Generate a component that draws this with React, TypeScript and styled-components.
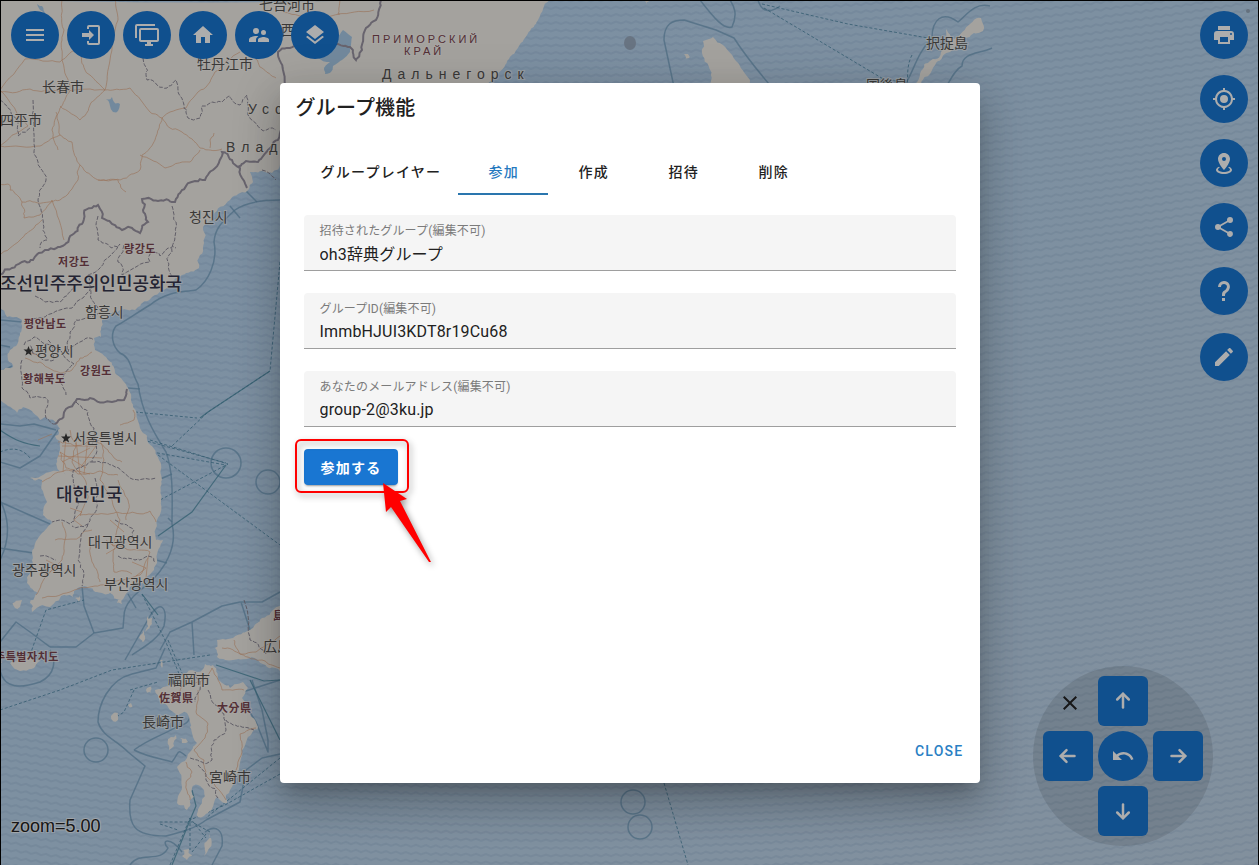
import React from "react";
import styled, { createGlobalStyle, css } from "styled-components";

const GlobalStyle = createGlobalStyle`
  *, *::before, *::after { box-sizing: border-box; }
  body {
    margin: 0;
    color: #212121;
    font-family: Roboto, "Noto Sans CJK JP", sans-serif;
    font-size: 16px;
    line-height: 24px;
  }
  button, input { font: inherit; }
`;

/* ---------- icons ---------- */

const icons = {
  menu: "M3,6H21V8H3V6M3,11H21V13H3V11M3,16H21V18H3V16Z",
  login:
    "M10,17V14H3V10H10V7L15,12L10,17M10,2H19A2,2 0 0,1 21,4V20A2,2 0 0,1 19,22H10A2,2 0 0,1 8,20V18H10V20H19V4H10V6H8V4A2,2 0 0,1 10,2Z",
  monitors:
    "M22,17V7H6V17H22M22,5A2,2 0 0,1 24,7V17C24,18.11 23.1,19 22,19H16V21H18V23H10V21H12V19H6C4.89,19 4,18.11 4,17V7A2,2 0 0,1 6,5H22M2,3V15H0V3A2,2 0 0,1 2,1H20V3H2Z",
  home: "M10,20V14H14V20H19V12H22L12,3L2,12H5V20H10Z",
  people:
    "M16.5,12A2.5,2.5 0 0,0 19,9.5A2.5,2.5 0 0,0 16.5,7A2.5,2.5 0 0,0 14,9.5A2.5,2.5 0 0,0 16.5,12M9,11A3,3 0 0,0 12,8A3,3 0 0,0 9,5A3,3 0 0,0 6,8A3,3 0 0,0 9,11M16.5,14C14.67,14 11,14.92 11,16.75V19H22V16.75C22,14.92 18.33,14 16.5,14M9,13C6.67,13 2,14.17 2,16.5V19H9V16.75C9,15.9 9.33,14.41 11.37,13.28C10.5,13.1 9.66,13 9,13Z",
  layers:
    "M12,16L19.36,10.27L21,9L12,2L3,9L4.63,10.27M12,18.54L4.62,12.81L3,14.07L12,21.07L21,14.07L19.37,12.8L12,18.54Z",
  printer:
    "M18,3H6V7H18M19,12A1,1 0 0,1 18,11A1,1 0 0,1 19,10A1,1 0 0,1 20,11A1,1 0 0,1 19,12M16,19H8V14H16M19,8H5A3,3 0 0,0 2,11V17H6V21H18V17H22V11A3,3 0 0,0 19,8Z",
  gps: "M12,8A4,4 0 0,1 16,12A4,4 0 0,1 12,16A4,4 0 0,1 8,12A4,4 0 0,1 12,8M3.05,13H1V11H3.05C3.5,6.83 6.83,3.5 11,3.05V1H13V3.05C17.17,3.5 20.5,6.83 20.95,11H23V13H20.95C20.5,17.17 17.17,20.5 13,20.95V23H11V20.95C6.83,20.5 3.5,17.17 3.05,13M12,5A7,7 0 0,0 5,12A7,7 0 0,0 12,19A7,7 0 0,0 19,12A7,7 0 0,0 12,5Z",
  marker:
    "M12,2C15.31,2 18,4.66 18,7.95C18,12.41 12,19 12,19C12,19 6,12.41 6,7.95C6,4.66 8.69,2 12,2M12,6A2,2 0 0,0 10,8A2,2 0 0,0 12,10A2,2 0 0,0 14,8A2,2 0 0,0 12,6M20,19C20,21.21 16.42,23 12,23C7.58,23 4,21.21 4,19C4,17.71 5.22,16.56 7.11,15.83L7.75,16.74C6.67,17.19 6,17.81 6,18.5C6,19.88 8.69,21 12,21C15.31,21 18,19.88 18,18.5C18,17.81 17.33,17.19 16.25,16.74L16.89,15.83C18.78,16.56 20,17.71 20,19Z",
  share:
    "M18,16.08C17.24,16.08 16.56,16.38 16.04,16.85L8.91,12.7C8.96,12.47 9,12.24 9,12C9,11.76 8.96,11.53 8.91,11.3L15.96,7.19C16.5,7.69 17.21,8 18,8A3,3 0 0,0 21,5A3,3 0 0,0 18,2A3,3 0 0,0 15,5C15,5.24 15.04,5.47 15.09,5.7L8.04,9.81C7.5,9.31 6.79,9 6,9A3,3 0 0,0 3,12A3,3 0 0,0 6,15C6.79,15 7.5,14.69 8.04,14.19L15.16,18.34C15.11,18.55 15.08,18.77 15.08,19C15.08,20.61 16.39,21.91 18,21.91C19.61,21.91 20.92,20.61 20.92,19A2.92,2.92 0 0,0 18,16.08Z",
  help: "M10,19H13V22H10V19M12,2C17.35,2.22 19.68,7.62 16.5,11.67C15.67,12.67 14.33,13.33 13.67,14.17C13,15 13,16 13,17H10C10,15.33 10,13.92 10.67,12.92C11.33,11.92 12.67,11.33 13.5,10.67C15.92,8.43 15.32,5.26 12,5A3,3 0 0,0 9,8H6A6,6 0 0,1 12,2Z",
  pencil:
    "M20.71,7.04C21.1,6.65 21.1,6 20.71,5.63L18.37,3.29C18,2.9 17.35,2.9 16.96,3.29L15.12,5.12L18.87,8.87M3,17.25V21H6.75L17.81,9.93L14.06,6.18L3,17.25Z",
  undo: "M12.5,8C9.85,8 7.45,9 5.6,10.6L2,7V16H11L7.38,12.38C8.77,11.22 10.54,10.5 12.5,10.5C16.04,10.5 19.05,12.81 20.1,16L22.47,15.22C21.08,11.03 17.15,8 12.5,8Z",
  close:
    "M19,6.41L17.59,5L12,10.59L6.41,5L5,6.41L10.59,12L5,17.59L6.41,19L12,13.41L17.59,19L19,17.59L13.41,12L19,6.41Z",
};

type IconName = keyof typeof icons;

const IconSvg = styled.svg`
  display: block;
  width: 24px;
  height: 24px;
  fill: currentColor;
`;

const Icon = ({ name }: { name: IconName }) => (
  <IconSvg viewBox="0 0 24 24" aria-hidden="true">
    <path d={icons[name]} />
  </IconSvg>
);

const Arrow = ({ angle }: { angle: number }) => (
  <IconSvg viewBox="0 0 24 24" aria-hidden="true">
    <g
      transform={`rotate(${angle} 12 12)`}
      fill="none"
      stroke="currentColor"
      strokeWidth="2.5"
      strokeLinecap="round"
    >
      <path d="M12 18.5V5" />
      <path d="M6.2 10.500L12 4.700L17.800 10.500" />
    </g>
  </IconSvg>
);

/* ---------- map geometry ---------- */

type Pt = [number, number];

let seed = 7;
const rand = () => {
  seed = (seed * 16807) % 2147483647;
  return seed / 2147483647 - 0.5;
};

/* Midpoint displacement: turns a coarse outline into a ragged coast or border. */
const rough = (src: string, amp: number, closed = false): string => {
  let pts: Pt[] = src.trim().split(/\s+/).map((p) => p.split(",").map(Number) as Pt);
  if (closed) pts = [...pts, pts[0]];
  for (let pass = 0; pass < 3; pass++) {
    const out: Pt[] = [];
    for (let i = 0; i < pts.length - 1; i++) {
      const [ax, ay] = pts[i];
      const [bx, by] = pts[i + 1];
      out.push(pts[i]);
      if (Math.hypot(bx - ax, by - ay) > 4) {
        const k = amp / (pass + 1);
        out.push([(ax + bx) / 2 + rand() * k, (ay + by) / 2 + rand() * k]);
      }
    }
    out.push(pts[pts.length - 1]);
    pts = out;
  }
  return "M" + pts.map(([x, y]) => `${x.toFixed(1)} ${y.toFixed(1)}`).join("L") + (closed ? "Z" : "");
};

const coasts = [
  "0,0 550,0 540,16 530,31 519,46 507,61 496,76 483,88 400,130 340,150 280,163 272,173 262,171 250,172 253,182 240,193 230,200 217,211 213,220 203,227 204,243 200,255 199,268 182,275 167,288 152,297 138,307 120,310 102,320 101,337 94,338 95,350 108,360 115,373 128,388 133,407 143,433 147,440 159,460 162,480 161,502 157,520 156,540 163,540 157,563 143,583 130,587 122,600 110,593 97,592 90,588 80,587 73,597 60,598 50,607 40,606 32,612 30,603 38,593 27,583 32,568 32,553 42,533 52,522 43,515 47,502 42,480 30,478 50,472 67,475 57,467 60,450 55,436 58,430 57,423 45,417 40,420 23,407 17,413 0,400 0,370 13,367 8,360 10,350 20,333 22,320 7,317 0,308",
  "197,672 205,664 213,665 218,680 230,688 243,682 248,688 242,698 248,712 258,727 248,737 240,763 230,790 227,803 217,797 208,813 198,817 202,803 204,790 198,785 192,788 194,797 190,803 187,810 177,803 182,787 177,767 187,758 197,743 190,727 187,713 178,715 168,707 160,703 155,690 163,687 177,683 187,673",
  "215,648 217,640 233,638 250,630 262,618 273,610 282,605 300,640 290,674 282,672 267,667 258,660 250,658 233,660 217,657",
  "10,663 18,658 30,657 40,661 34,668 20,671",
  "713,37 703,41 702,53 709,67 710,85 711,101 762,101 750,80 736,61 723,45",
  "981,18 983,31 974,33 962,41 950,52 938,61 930,74 921,84 913,98 911,92 921,71 930,61 941,52 950,43 946,29 954,39 970,24",
  "148,616 152,618 150,626 145,632",
  "143,630 145,636 142,642 139,638",
  "209,834 211,838 208,850 204,856 206,842",
  "183,850 189,849 192,856 187,860 182,856",
  "170,738 176,735 174,746 169,750",
  "180,738 186,736 188,742 182,743",
  "111,716 118,713 118,720 113,721",
  "128,705 131,703 132,707",
  "147,688 151,686 151,693",
  "160,660 163,660 162,668",
  "684,54 688,54 689,58 685,59",
  "15,602 22,600 20,607 15,608",
  "118,600 123,597 122,604 117,603",
  "75,598 81,594 79,602",
  "643,0 650,0 646,4",
];

const lakes = [
  "106,99 112,97 114,102 120,104 118,111 113,112 110,106",
  "343,30 352,37 350,52 342,60 333,66 331,72 325,74 324,68 330,62 318,58 326,44",
  "37,4 42,6 46,14 40,10",
];

const nationalBorders = [
  "0,275 12,268 22,262 33,260 45,250 60,247 72,235 82,224 84,213 92,208 98,205 102,218 112,224 122,230 132,228 140,233 148,222 143,210 142,199 158,201 175,202 182,190 195,181 205,180 213,170 222,152 232,160 240,168 242,178 247,188",
  "238,167 246,161 258,162 268,150 278,140 284,120 283,70 278,52 290,48 318,40 335,43 350,47 356,60 362,50 366,28 376,20 381,0",
  "55,424 66,409 77,399 90,398 112,402 124,400 127,389",
];

const provinceBorders = [
  "143,58 147,80 158,86 167,88 176,80 184,105 188,118 200,118 202,106 212,102 222,102 230,96 240,105 247,95 248,115 262,130 276,130",
  "33,100 34,140 38,165 46,180 38,200 43,220 47,240 40,248",
  "0,100 8,108 18,120 18,136 30,128",
  "98,216 98,240 112,248 120,244 100,268 88,275 90,290 72,308 50,314 24,322",
  "124,245 118,262 122,275 150,262 150,250 160,256 168,248 176,248",
  "172,206 176,222 172,252 168,262 172,276",
  "90,285 92,300 102,312 76,320 70,332 68,352 84,340 94,340",
  "35,296 45,302 60,302 80,282",
  "24,345 34,337 50,345 62,352 74,364 60,380 66,395",
  "22,360 22,388 30,398 48,400 46,418 56,424",
  "48,340 54,360 38,356 30,345",
  "76,402 88,412 94,428 92,444",
  "98,440 92,462 78,468 72,476 78,500 75,516 70,524 60,520 52,522",
  "92,462 112,465 130,478 156,478",
  "95,478 96,500 94,514 88,524 72,526",
  "88,524 80,545 78,560 84,574 82,586",
  "115,520 124,524 134,530 128,540",
  "118,556 135,560 148,556 156,562",
  "40,556 56,560",
  "208,690 214,704 224,716 226,730 214,740 212,760 202,762 190,758",
  "195,672 200,690 195,702",
  "226,720 240,726 254,730",
  "198,765 206,780 216,790 218,798",
  "244,600 250,640 266,654",
  "262,170 276,180",
];

const roads = [
  "0,92 30,89 60,92 105,90 130,88 150,112 162,118 170,128 182,132 200,148 222,149",
  "25,59 0,90 28,126 0,146",
  "25,59 60,62 80,48 100,42",
  "62,0 64,30 62,60 70,90 60,108 52,130 58,150",
  "105,90 85,70 80,50",
  "105,90 90,105 80,120 60,106",
  "162,118 155,140 142,155 140,170 120,180 98,180 80,165 72,142 60,135 56,112",
  "0,146 40,146 60,135",
  "162,118 186,108 198,92 210,82 218,70 240,52",
  "140,155 165,168 190,162 200,150",
  "98,180 118,180 126,192",
  "80,165 78,180 60,200 38,203 22,202 10,190 8,184 0,184",
  "22,202 24,218 40,215 52,200 64,240",
  "0,255 20,240 34,228 42,220",
  "210,148 210,140 214,133",
  "250,55 262,68 276,78",
  "115,0 118,20 110,60 105,90",
  "25,358 40,362 58,372 72,370 80,358 92,352",
  "120,425 134,420 133,410",
  "58,442 75,446 92,440 108,450 122,462",
  "60,452 66,468 78,474 100,471 118,475",
  "70,430 76,445 72,462 84,478 88,498 80,516",
  "100,440 104,460 100,480 112,500 120,520 112,545",
  "80,515 105,514 130,513 150,511 156,522",
  "62,522 66,536 62,560 48,575 36,595",
  "112,545 130,550 150,552 140,575 120,580 95,586 70,592 42,598",
  "55,540 78,538 92,530",
  "90,545 92,562 100,582",
  "115,548 114,572 132,574",
  "42,482 66,470 90,474",
  "118,480 128,500 126,520",
  "212,668 200,682 182,686 170,700",
  "212,668 222,690 244,690",
  "198,690 196,712 208,724 205,738 194,750",
  "194,750 204,760 206,776 226,800",
  "232,782 242,752 240,734 256,728",
  "186,762 192,772 186,782 190,800",
  "222,648 240,654 262,660 280,668",
  "234,640 240,654 256,652 280,636",
  "340,0 338,14 374,10",
  "280,10 300,16 340,14",
];

const denseRoads =
  "M62 446l34 0 M58 456l44 2 M66 436l-3 36 M76 440l4 34 M88 438l-4 36 M62 462l28-14 M60 452l26 16 M96 446l-16 22 M70 508l12 4-8 8 8 6 M106 540l10 8-10 6 M132 562l14 6-10 8 M148 558l-2 20 M110 520l14 12 M46 560l12 6-14 10 M38 440l14-6 M28 352l12 4";

const seaBoundaries = [
  "M280 200C262 200 246 202 235 210C222 222 215 228 214 242C218 262 208 282 196 290C186 292 168 290 150 305C138 312 124 322 116 326C110 334 112 346 120 353C132 358 130 370 138 384C142 412 152 430 166 452C174 474 172 500 172 524C178 548 164 570 148 584C138 592 124 602 124 616L123 628L94 633L76 647H50",
  "M245 190l12 12M230 206l10 12M128 388l12 1M158 480l14-6M172 522l-4-4M156 560l11 3M128 594l8 14M82 586l2 20 10 27",
  "M0 320L22 322M0 345L10 347M0 372L12 366M0 424L20 426L34 424L56 430M0 462L20 468L40 456L58 430M0 500C10 520 10 540 0 560M0 502L50 524M0 548L34 553",
  "M0 642L16 622L30 632L50 647M0 670C4 690 22 688 40 682C56 674 56 660 50 650",
  "M125 660L150 616C160 600 168 606 164 626C158 640 142 648 132 655M160 650L170 632L192 622L222 606L240 602L262 602L280 592M192 622L194 655M241 602L250 630",
  "M165 648L156 668L132 674C108 680 98 706 98 722C102 736 116 740 128 752L145 766L130 800C128 826 134 836 166 836C182 832 196 828 206 820M134 750C150 738 166 734 178 726C190 724 194 716 184 706M134 750C150 758 160 758 172 762C180 752 176 748 186 756",
  "M206 820L240 802L246 770L262 758L280 754M242 700L256 722L268 752L268 740L262 710L252 680M218 700L280 680",
  "M130 865C140 850 160 864 168 848C160 840 170 836 182 852M205 832C216 824 224 830 222 846L212 865",
  "M525 0C515 22 500 26 494 44C480 60 472 70 474 86",
  "M677 101L664 40C664 24 672 20 684 20L716 30L734 38C748 60 772 88 790 108",
  "M700 0C714 18 724 30 732 27C738 14 734 6 730 0M758 0C762 14 772 12 780 6",
  "M990 6C974 2 966 16 958 22C942 10 932 20 932 38C916 54 914 72 904 86C892 76 880 78 868 96M992 48C980 54 962 52 962 66C950 72 946 96 932 104M840 104C840 92 852 92 858 100",
];

const ferryRoutes = [
  "M280 262L270 371L208 412L172 446",
  "M135 412L197 418M150 440L228 464L160 500L152 502M152 452L226 465M158 455L280 545M143 440L226 463",
  "M0 710L60 690L112 670L210 655M130 690L158 682M134 690L124 712L118 716M142 594L165 640L190 700M30 655L46 610L84 600",
  "M280 758L206 818M280 774L225 805L190 820M210 832L192 822L158 822M170 865L190 818L206 838M190 818V850M206 834L192 852M168 640L185 680M160 824L178 830",
  "M762 4L848 24L945 41M764 8L885 80L908 90M912 55C904 70 910 90 906 100",
  "M664 783L688 865",
  "M0 452C14 446 24 450 30 458",
];

const shippingLines = [
  "M226 465L192 512L158 536",
  "M142 594L158 615M216 665L264 681L280 680M250 680L280 740",
  "M192 790L196 806L190 820L172 865M0 430C14 440 24 444 40 446",
  "M270 371L208 412L200 418",
];

const rings: [number, number, number][] = [
  [226, 463, 15],
  [268, 482, 12],
  [96, 750, 12],
  [633, 802, 12],
  [640, 827, 12],
];

/* Wave texture lines: their slope follows the curved parallels of the projection. */
const waveLine = (y0: number): string => {
  const pts: string[] = [];
  for (let x = -4, i = 0; x <= 1264; x += 5, i++) {
    const u = (x - 620) / 620;
    const y = y0 - 46 * u * u - 10 * u + (i % 2 ? 1 : -1);
    pts.push(`${x} ${y.toFixed(1)}`);
  }
  return "M" + pts.join("L");
};
const waves = Array.from({ length: 128 }, (_, i) => waveLine(i * 7.5)).join("");

const coastPath = coasts.map((c) => rough(c, 5, true)).join("");
const lakePath = lakes.map((c) => rough(c, 3, true)).join("");
const nationalPath = nationalBorders.map((c) => rough(c, 5)).join("");
const provincePath = provinceBorders.map((c) => rough(c, 5)).join("");
const roadPath = roads.map((c) => rough(c, 4)).join("");

type LabelKind = "city" | "region" | "country" | "wide" | "wideRegion";

const labels: [LabelKind, number, number, string][] = [
  ["city", 259, 10, "七台河市"],
  ["city", 267, 35, "鸡西市"],
  ["city", 197, 69, "牡丹江市"],
  ["city", 42, 92, "长春市"],
  ["city", 0, 125, "四平市"],
  ["wide", 248, 114, "Усс"],
  ["wide", 226, 152, "Влад"],
  ["wideRegion", 372, 43, "ПРИМОРСКИЙ"],
  ["wideRegion", 404, 55, "КРАЙ"],
  ["wide", 382, 79, "Дальнегорск"],
  ["city", 926, 48, "択捉島"],
  ["city", 866, 90, "国後島"],
  ["city", 189, 222, "청진시"],
  ["region", 124, 253, "량강도"],
  ["region", 58, 266, "저강도"],
  ["country", 0, 290, "조선민주주의인민공화국"],
  ["city", 85, 317, "함흥시"],
  ["region", 24, 328, "평안남도"],
  ["city", 35, 356, "평양시"],
  ["region", 80, 375, "강원도"],
  ["region", 23, 383, "황해북도"],
  ["city", 73, 443, "서울특별시"],
  ["country", 56, 501, "대한민국"],
  ["city", 88, 547, "대구광역시"],
  ["city", 12, 575, "광주광역시"],
  ["city", 104, 589, "부산광역시"],
  ["region", -5, 661, "주특별자치도"],
  ["region", 273, 620, "島根県"],
  ["city", 263, 651, "広島市"],
  ["city", 168, 685, "福岡市"],
  ["region", 159, 702, "佐賀県"],
  ["region", 217, 712, "大分県"],
  ["city", 142, 727, "長崎市"],
  ["city", 209, 782, "宮崎市"],
];

const MapSvg = styled.svg`
  position: absolute;
  inset: 0;
  width: 100%;
  height: 100%;
`;

const labelStyles = {
  city: css`
    font-size: 14px;
    fill: #565553;
  `,
  region: css`
    font-size: 11px;
    font-weight: 700;
    letter-spacing: 0.05em;
    fill: #7c4650;
  `,
  country: css`
    font-size: 18px;
    font-weight: 500;
    fill: #36364c;
  `,
  wide: css`
    font-size: 14px;
    letter-spacing: 6px;
    fill: #565553;
  `,
  wideRegion: css`
    font-size: 11px;
    letter-spacing: 3px;
    fill: #7c4650;
  `,
};

const MapLabel = styled.text<{ $kind: LabelKind }>`
  font-family: "Liberation Sans", "Noto Sans CJK KR", "Noto Sans CJK SC", sans-serif;
  paint-order: stroke;
  stroke: rgba(250, 248, 244, 0.6);
  stroke-width: 2px;
  ${(p) => labelStyles[p.$kind]}
`;

const BackgroundMap = () => (
  <MapSvg viewBox="1 1 1257 864" preserveAspectRatio="xMinYMin slice" role="img" aria-label="地図">
    <defs>
      <linearGradient id="sea" x1="0" y1="0" x2="1" y2="1">
        <stop offset="0" stopColor="#b6d4f1" />
        <stop offset="0.5" stopColor="#b9d4ed" />
        <stop offset="1" stopColor="#c0d4e8" />
      </linearGradient>
    </defs>
    <rect width="1260" height="866" fill="url(#sea)" />
    <path d={waves} fill="none" stroke="#88a8c8" strokeOpacity="0.2" strokeWidth="2" />
    <g fill="none" stroke="#6f9cbd" strokeOpacity="0.7" strokeWidth="1.5" strokeLinejoin="round">
      {seaBoundaries.map((d) => (
        <path key={d} d={d} />
      ))}
      {rings.map(([cx, cy, r]) => (
        <circle key={`${cx}-${cy}`} cx={cx} cy={cy} r={r} />
      ))}
    </g>
    <g fill="none" stroke="#4f88a6" strokeOpacity="0.8" strokeWidth="1" strokeDasharray="3 2">
      {ferryRoutes.map((d) => (
        <path key={d} d={d} />
      ))}
    </g>
    <g fill="none" stroke="#4f8fa8" strokeOpacity="0.8" strokeWidth="1.2">
      {shippingLines.map((d) => (
        <path key={d} d={d} />
      ))}
    </g>
    <path d={coastPath} fill="#f2efe9" />
    <path d={lakePath} fill="#a9cbe8" />
    <path d={roadPath} fill="none" stroke="#e0a782" strokeOpacity="0.7" strokeWidth="0.9" />
    <path d={denseRoads} fill="none" stroke="#e8a478" strokeOpacity="0.7" strokeWidth="0.8" />
    <path d={provincePath} fill="none" stroke="#8e8a98" strokeWidth="1" strokeDasharray="4 1.5" />
    <path d={nationalPath} fill="none" stroke="#9a94a2" strokeWidth="2" />
    <ellipse cx="630" cy="43" rx="6" ry="7" fill="#9aabc0" />
    <circle cx="1248" cy="11" r="2" fill="#94a6b8" />
    <g fill="#3a3a3a">
      <path d="M28.500 346l1.300 3.600h3.700l-3 2.300 1.100 3.700-3.100-2.200-3.100 2.200 1.100-3.700-3-2.300h3.700z" />
      <path d="M66 433l1.300 3.600h3.700l-3 2.300 1.100 3.700-3.100-2.200-3.100 2.200 1.100-3.700-3-2.300h3.700z" />
    </g>
    {labels.map(([kind, x, y, text]) => (
      <MapLabel key={text} $kind={kind} x={x} y={y}>
        {text}
      </MapLabel>
    ))}
  </MapSvg>
);

/* ---------- page ---------- */

const Screen = styled.main`
  position: relative;
  display: flex;
  flex-direction: column;
  justify-content: space-between;
  min-height: 100vh;
  overflow: hidden;
  border: 1px solid #000;
  border-bottom: 0;
`;

const ScreenRow = styled.div<{ $align: "start" | "end" }>`
  position: relative;
  display: flex;
  justify-content: space-between;
  align-items: flex-${(p) => p.$align};
  padding: 10px;
`;

const TopTools = styled.nav`
  display: flex;
  gap: 8px;
`;

const SideTools = styled.div`
  display: flex;
  flex-direction: column;
  gap: 18px;
`;

const SideGroup = styled.div`
  display: flex;
  flex-direction: column;
  gap: 16px;
`;

const controlColors = css`
  display: flex;
  align-items: center;
  justify-content: center;
  padding: 0;
  border: 0;
  background: #1976d2;
  color: #fff;
  cursor: pointer;
`;

const RoundButton = styled.button`
  ${controlColors}
  width: 48px;
  height: 48px;
  border-radius: 50%;
`;

const ZoomReadout = styled.output`
  font-family: "Liberation Sans", sans-serif;
  font-size: 18px;
  line-height: 24px;
  padding-bottom: 17px;
  color: #222;
  text-shadow: 1px 1px 0 #fff8, -1px -1px 0 #fff8, 1px -1px 0 #fff8, -1px 1px 0 #fff8;
`;

const MovePad = styled.div`
  display: grid;
  grid-template-columns: repeat(3, 50px);
  grid-template-rows: repeat(3, 50px);
  gap: 5px;
  margin: 0 35px 9px 0;
  padding: 10px;
  border-radius: 50%;
  background: rgba(0, 0, 0, 0.1);
`;

const PadButton = styled.button<{ $col: number; $row: number; $round?: boolean }>`
  ${controlColors}
  grid-column: ${(p) => p.$col};
  grid-row: ${(p) => p.$row};
  border-radius: ${(p) => (p.$round ? "50%" : "6px")};
`;

const PadClose = styled.button`
  display: grid;
  place-content: center;
  grid-column: 1;
  grid-row: 1;
  padding: 4px 0 0 4px;
  border: 0;
  background: none;
  color: #222;
  cursor: pointer;
`;

/* ---------- dialog ---------- */

const Scrim = styled.div`
  position: absolute;
  inset: 0;
  display: flex;
  align-items: center;
  justify-content: center;
  background: rgba(0, 0, 0, 0.32);
`;

const Dialog = styled.section`
  display: flex;
  flex-direction: column;
  width: 700px;
  max-width: calc(100% - 48px);
  min-height: 700px;
  border-radius: 4px;
  background: #fff;
  box-shadow: 0 11px 15px -7px rgba(0, 0, 0, 0.2), 0 24px 38px 3px rgba(0, 0, 0, 0.14),
    0 9px 46px 8px rgba(0, 0, 0, 0.12);
`;

const DialogTitle = styled.h1`
  margin: 0;
  padding: 13px 16px 11px;
  font-size: 20px;
  font-weight: 500;
  line-height: 24px;
  letter-spacing: 0.01em;
`;

const DialogBody = styled.div`
  flex: 1;
  padding: 16px 24px;
`;

const Tabs = styled.div`
  display: flex;
`;

const Tab = styled.button<{ $active: boolean }>`
  min-width: 90px;
  height: 48px;
  padding: 4px 16px 0 17px;
  border: 0;
  border-bottom: 2px solid ${(p) => (p.$active ? "#2a76ae" : "transparent")};
  background: none;
  color: ${(p) => (p.$active ? "#2478be" : "#212121")};
  font-size: 14px;
  font-weight: 500;
  letter-spacing: 0.09em;
  cursor: pointer;

  &:first-child {
    padding-right: 17px;
  }
`;

const JoinForm = styled.form`
  display: flex;
  flex-direction: column;
  align-items: flex-start;
  gap: 22px;
  padding-top: 20px;
`;

const Field = styled.div`
  display: flex;
  flex-direction: column;
  width: 100%;
  height: 56px;
  padding: 7px 16px 0;
  border-bottom: 1px solid #9e9e9e;
  border-radius: 4px 4px 0 0;
  background: #f5f5f5;
  letter-spacing: 0.01em;
`;

const FieldLabel = styled.label`
  color: #7b7b7b;
  font-size: 12px;
  line-height: 18px;
`;

const FieldInput = styled.input`
  width: 100%;
  height: 26px;
  padding: 0;
  border: 0;
  outline: 0;
  background: none;
  color: #212121;
  letter-spacing: inherit;
`;

const JoinAction = styled.div`
  position: relative;
`;

const JoinButton = styled.button`
  height: 36px;
  padding: 1px 16px 0 17px;
  border: 0;
  border-radius: 4px;
  background: #1976d2;
  color: #fff;
  font-size: 14px;
  font-weight: 700;
  letter-spacing: 0.09em;
  box-shadow: 0 3px 1px -2px rgba(0, 0, 0, 0.2), 0 2px 2px rgba(0, 0, 0, 0.14);
  cursor: pointer;
`;

const Highlight = styled.svg`
  position: absolute;
  top: -14px;
  left: -14px;
  width: 150px;
  height: 136px;
  overflow: visible;
  pointer-events: none;
  filter: drop-shadow(2px 3px 3px rgba(0, 0, 0, 0.4));
`;

const DialogActions = styled.footer`
  display: flex;
  justify-content: flex-end;
  padding: 0 8px 14px;
`;

const TextButton = styled.button`
  height: 36px;
  padding: 0 8px;
  border: 0;
  background: none;
  color: #2a80c4;
  font-size: 14px;
  font-weight: 500;
  letter-spacing: 0.09em;
  cursor: pointer;
`;

const topTools: [IconName, string][] = [
  ["menu", "メニュー"],
  ["login", "ログイン"],
  ["monitors", "画面"],
  ["home", "ホーム"],
  ["people", "グループ"],
  ["layers", "レイヤー"],
];

const sideTools: [IconName, string][] = [
  ["printer", "印刷"],
  ["gps", "現在地"],
  ["marker", "地点"],
  ["share", "共有"],
  ["help", "ヘルプ"],
];

const tabs = ["グループレイヤー", "参加", "作成", "招待", "削除"];

const fields = [
  { id: "group-name", label: "招待されたグループ(編集不可)", value: "oh3辞典グループ" },
  { id: "group-id", label: "グループID(編集不可)", value: "ImmbHJUI3KDT8r19Cu68" },
  { id: "mail", label: "あなたのメールアドレス(編集不可)", value: "group-2@3ku.jp" },
];

export default function App() {
  const [active, setActive] = React.useState("参加");

  return (
    <>
      <GlobalStyle />
      <Screen>
        <BackgroundMap />
        <ScreenRow $align="start">
          <TopTools>
            {topTools.map(([name, label]) => (
              <RoundButton key={name} type="button" aria-label={label}>
                <Icon name={name} />
              </RoundButton>
            ))}
          </TopTools>
          <SideTools>
            <SideGroup>
              {sideTools.map(([name, label]) => (
                <RoundButton key={name} type="button" aria-label={label}>
                  <Icon name={name} />
                </RoundButton>
              ))}
            </SideGroup>
            <RoundButton type="button" aria-label="編集">
              <Icon name="pencil" />
            </RoundButton>
          </SideTools>
        </ScreenRow>
        <ScreenRow $align="end">
          <ZoomReadout>zoom=5.00</ZoomReadout>
          <MovePad>
            <PadClose type="button" aria-label="閉じる">
              <Icon name="close" />
            </PadClose>
            <PadButton $col={2} $row={1} type="button" aria-label="上">
              <Arrow angle={0} />
            </PadButton>
            <PadButton $col={1} $row={2} type="button" aria-label="左">
              <Arrow angle={-90} />
            </PadButton>
            <PadButton $col={2} $row={2} $round type="button" aria-label="戻す">
              <Icon name="undo" />
            </PadButton>
            <PadButton $col={3} $row={2} type="button" aria-label="右">
              <Arrow angle={90} />
            </PadButton>
            <PadButton $col={2} $row={3} type="button" aria-label="下">
              <Arrow angle={180} />
            </PadButton>
          </MovePad>
        </ScreenRow>

        <Scrim>
          <Dialog role="dialog" aria-modal="true" aria-labelledby="dialog-title">
            <DialogTitle id="dialog-title">グループ機能</DialogTitle>
            <DialogBody>
              <Tabs role="tablist">
                {tabs.map((name) => (
                  <Tab
                    key={name}
                    type="button"
                    role="tab"
                    aria-selected={name === active}
                    $active={name === active}
                    onClick={() => setActive(name)}
                  >
                    {name}
                  </Tab>
                ))}
              </Tabs>
              <JoinForm onSubmit={(e) => e.preventDefault()}>
                {fields.map(({ id, label, value }) => (
                  <Field key={id}>
                    <FieldLabel htmlFor={id}>{label}</FieldLabel>
                    <FieldInput id={id} value={value} readOnly />
                  </Field>
                ))}
                <JoinAction>
                  <JoinButton type="submit">参加する</JoinButton>
                  <Highlight viewBox="0 0 150 136" aria-hidden="true">
                    <rect x="6" y="5" width="112" height="52" rx="5" fill="none" stroke="#f00" strokeWidth="2" />
                    <path d="M93 48L117 64L110 66L141 127L139 127L101 72L96 77Z" fill="#f00" />
                  </Highlight>
                </JoinAction>
              </JoinForm>
            </DialogBody>
            <DialogActions>
              <TextButton type="button">CLOSE</TextButton>
            </DialogActions>
          </Dialog>
        </Scrim>
      </Screen>
    </>
  );
}
